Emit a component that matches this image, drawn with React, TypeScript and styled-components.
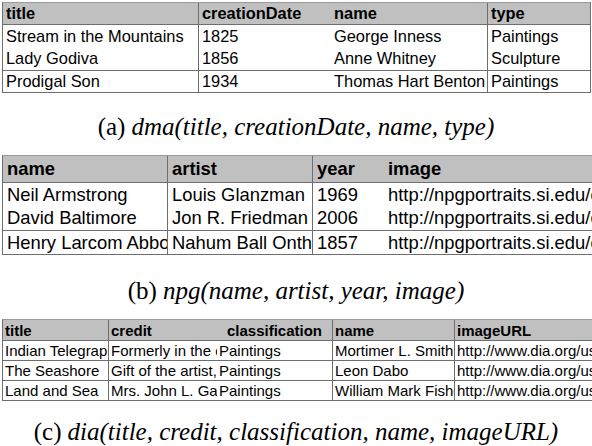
import React from "react";
import styled, { createGlobalStyle } from "styled-components";

const Global = createGlobalStyle`
  html, body { margin: 0; padding: 0; background: #ffffff; }
  body { width: 592px; height: 446px; overflow: hidden; }
`;

const Page = styled.div`
  display: flex;
  flex-direction: column;
  padding-top: 2px;
  width: 592px;
  overflow: hidden;
`;

const SheetClip = styled.div`
  width: 592px;
  overflow: hidden;
`;

const Sheet = styled.div<{ $cols: string; $rows: string; $size: number }>`
  display: grid;
  grid-template-columns: ${(p) => p.$cols};
  grid-template-rows: ${(p) => p.$rows};
  margin-left: 2px;
  width: max-content;
  font-family: "Liberation Sans", Arial, sans-serif;
  font-size: ${(p) => p.$size}px;
  color: #000;
  border-top: 1px solid #9a9a9a;
  border-left: 1px solid #6e6e6e;
  border-right: 1px solid #6e6e6e;
  border-bottom: 1px solid #6e6e6e;
`;

const Cell = styled.div<{ $head?: boolean; $noLeft?: boolean; $first?: boolean; $line?: boolean; $pad: number; $span?: number }>`
  display: flex;
  align-items: center;
  justify-content: ${(p) => (p.$span ? "space-between" : "flex-start")};
  grid-column: ${(p) => (p.$span ? `span ${p.$span}` : "auto")};
  padding-left: ${(p) => p.$pad}px;
  padding-right: ${(p) => (p.$span ? 10 : 0)}px;
  white-space: nowrap;
  overflow: hidden;
  background: ${(p) => (p.$head ? "#c0c0c0" : "#ffffff")};
  font-weight: ${(p) => (p.$head ? 700 : 400)};
  border-left: ${(p) => (p.$first || p.$noLeft ? "none" : "1px solid #6e6e6e")};
  border-top: ${(p) => (p.$line ? "1px solid #6e6e6e" : "none")};
  box-sizing: border-box;
`;

const Caption = styled.div<{ $h: number; $pt: number }>`
  height: ${(p) => p.$h}px;
  padding-top: ${(p) => p.$pt}px;
  box-sizing: border-box;
  display: flex;
  align-items: center;
  justify-content: center;
  font-family: "Liberation Serif", "Times New Roman", serif;
  font-size: 25px;
  color: #000;
  white-space: nowrap;
`;

const Label = styled.span`
  font-style: normal;
  margin-right: 6px;
`;

const Sig = styled.span`
  font-style: italic;
`;

type HeadSpec = { text: string; extra?: string; span?: number; noLeft?: boolean };

type TableSpec = {
  cols: number[];
  rowsTpl: string;
  size: number;
  pad: number;
  headers: HeadSpec[];
  rows: string[][];
  noLeft: number[];
  lines: number[];
};

function Table({ spec }: { spec: TableSpec }) {
  const colStr = spec.cols.map((c) => `${c}px`).join(" ");
  return (
    <SheetClip>
      <Sheet $cols={colStr} $rows={spec.rowsTpl} $size={spec.size}>
        {spec.headers.map((h, i) => (
          <Cell key={`h${i}`} $head $first={i === 0} $noLeft={h.noLeft} $pad={spec.pad} $span={h.span}>
            <span>{h.text}</span>
            {h.extra && <span>{h.extra}</span>}
          </Cell>
        ))}
        {spec.rows.map((r, ri) =>
          r.map((v, ci) => (
            <Cell
              key={`${ri}-${ci}`}
              $first={ci === 0}
              $noLeft={spec.noLeft.includes(ci)}
              $line={spec.lines.includes(ri)}
              $pad={spec.pad}
            >
              {v}
            </Cell>
          ))
        )}
      </Sheet>
    </SheetClip>
  );
}

const dma: TableSpec = {
  cols: [195, 133, 156, 103],
  rowsTpl: "21px 23px 23px 22px",
  size: 16.4,
  pad: 3,
  headers: [{ text: "title" }, { text: "creationDate" }, { text: "name", noLeft: true }, { text: "type" }],
  rows: [
    ["Stream in the Mountains", "1825", "George Inness", "Paintings"],
    ["Lady Godiva", "1856", "Anne Whitney", "Sculpture"],
    ["Prodigal Son", "1934", "Thomas Hart Benton", "Paintings"],
  ],
  noLeft: [2],
  lines: [0, 2],
};

const npg: TableSpec = {
  cols: [164, 145, 72, 240],
  rowsTpl: "26px 24px 24px 24px",
  size: 18.4,
  pad: 4,
  headers: [{ text: "name" }, { text: "artist" }, { text: "year" }, { text: "image", noLeft: true }],
  rows: [
    ["Neil Armstrong", "Louis Glanzman", "1969", "http://npgportraits.si.edu/eP"],
    ["David Baltimore", "Jon R. Friedman", "2006", "http://npgportraits.si.edu/eP"],
    ["Henry Larcom Abbott", "Nahum Ball Onthank", "1857", "http://npgportraits.si.edu/eP"],
  ],
  noLeft: [3],
  lines: [0, 2],
};

const dia: TableSpec = {
  cols: [105, 109, 115, 122, 160],
  rowsTpl: "20px 20px 20px 20px",
  size: 15,
  pad: 2,
  headers: [
    { text: "title" },
    { text: "credit", extra: "classification", span: 2 },
    { text: "name" },
    { text: "imageURL" },
  ],
  rows: [
    ["Indian Telegraph", "Formerly in the collection", "Paintings", "Mortimer L. Smith", "http://www.dia.org/user_data"],
    ["The Seashore", "Gift of the artist, 1912", "Paintings", "Leon Dabo", "http://www.dia.org/user_data"],
    ["Land and Sea", "Mrs. John L. Gaylord", "Paintings", "William Mark Fisher", "http://www.dia.org/user_data"],
  ],
  noLeft: [2],
  lines: [0, 1, 2],
};

export default function App() {
  return (
    <>
      <Global />
      <Page>
        <Table spec={dma} />
        <Caption $h={62} $pt={6}>
          <Label>(a)</Label>
          <Sig>dma(title, creationDate, name, type)</Sig>
        </Caption>
        <Table spec={npg} />
        <Caption $h={64} $pt={8}>
          <Label>(b)</Label>
          <Sig>npg(name, artist, year, image)</Sig>
        </Caption>
        <Table spec={dia} />
        <Caption $h={45} $pt={17}>
          <Label>(c)</Label>
          <Sig>dia(title, credit, classification, name, imageURL)</Sig>
        </Caption>
      </Page>
    </>
  );
}
